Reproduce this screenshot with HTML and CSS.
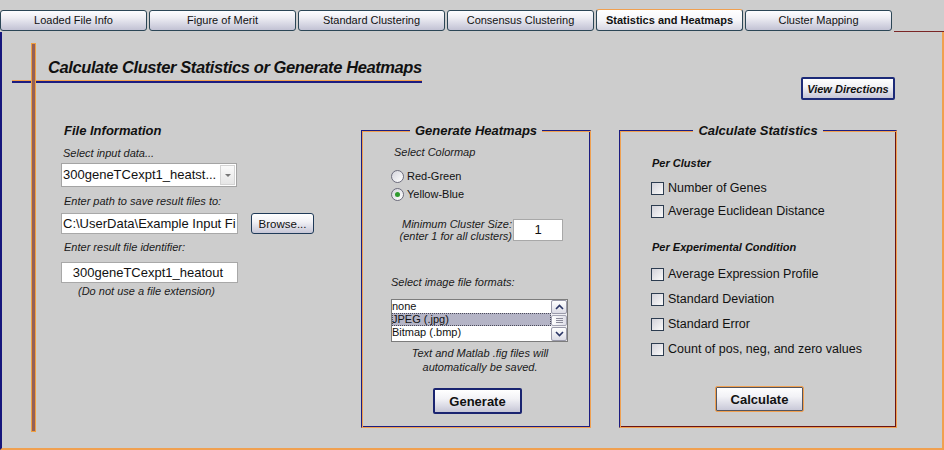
FILE: index.html
```html
<!DOCTYPE html>
<html>
<head>
<meta charset="utf-8">
<link rel="stylesheet" href="styles.css">
</head>
<body>
<div class="tabs">
  <div class="tab">Loaded File Info</div>
  <div class="tab">Figure of Merit</div>
  <div class="tab">Standard Clustering</div>
  <div class="tab">Consensus Clustering</div>
  <div class="tab active">Statistics and Heatmaps</div>
  <div class="tab">Cluster Mapping</div>
  <div class="tab-fill"></div>
</div>
<div class="panel">
  <div class="cross-v"></div>
  <div class="header">
    <div class="title-block"><h1 class="title">Calculate Cluster Statistics or Generate Heatmaps</h1></div>
    <button class="btn btn-dir">View Directions</button>
  </div>
  <div class="content">
    <div class="file-col">
      <div class="h-file">File Information</div>
      <div class="lbl lbl-1">Select input data...</div>
      <div class="combo">
        <div class="combo-text">300geneTCexpt1_heatst...</div>
        <div class="combo-btn"><span class="tri"></span></div>
      </div>
      <div class="lbl lbl-2">Enter path to save result files to:</div>
      <div class="path-row">
        <div class="field">C:\UserData\Example Input Fi</div>
        <button class="btn btn-browse">Browse...</button>
      </div>
      <div class="lbl lbl-3">Enter result file identifier:</div>
      <div class="field field-id">300geneTCexpt1_heatout</div>
      <div class="lbl note-ext">(Do not use a file extension)</div>
    </div>

    <div class="frame heat">
      <div class="frame-head"><span>Generate Heatmaps</span></div>
      <div class="frame-body">
        <div class="lbl cm">Select Colormap</div>
        <div class="radio-row first"><span class="radio"></span><span>Red-Green</span></div>
        <div class="radio-row"><span class="radio on"></span><span>Yellow-Blue</span></div>
        <div class="min-row">
          <div class="min-lbl">Minimum Cluster Size:<br>(enter 1 for all clusters)</div>
          <div class="field field-min">1</div>
        </div>
        <div class="lbl fmt">Select image file formats:</div>
        <div class="listbox">
          <div class="items">
            <div class="item">none</div>
            <div class="item sel">JPEG (.jpg)</div>
            <div class="item">Bitmap (.bmp)</div>
            <div class="item">EPS (.eps)</div>
          </div>
          <div class="sb">
            <div class="sb-btn"><svg width="9" height="6" viewBox="0 0 9 6"><path d="M1 5 L4.5 1.5 L8 5" fill="none" stroke="#2a3566" stroke-width="1.6"/></svg></div>
            <div class="sb-thumb"><i></i><i></i><i></i></div>
            <div class="sb-btn"><svg width="9" height="6" viewBox="0 0 9 6"><path d="M1 1 L4.5 4.5 L8 1" fill="none" stroke="#2a3566" stroke-width="1.6"/></svg></div>
          </div>
        </div>
        <div class="note">Text and Matlab .fig files will<br>automatically be saved.</div>
        <button class="btn btn-big btn-gen">Generate</button>
      </div>
    </div>

    <div class="frame stats">
      <div class="frame-head"><span>Calculate Statistics</span></div>
      <div class="frame-body">
        <div class="sub sub-1">Per Cluster</div>
        <div class="cb-row r1"><span class="cb"></span><span>Number of Genes</span></div>
        <div class="cb-row r2"><span class="cb"></span><span>Average Euclidean Distance</span></div>
        <div class="sub sub-2">Per Experimental Condition</div>
        <div class="cb-row r3"><span class="cb"></span><span>Average Expression Profile</span></div>
        <div class="cb-row r4"><span class="cb"></span><span>Standard Deviation</span></div>
        <div class="cb-row r4"><span class="cb"></span><span>Standard Error</span></div>
        <div class="cb-row r4"><span class="cb"></span><span>Count of pos, neg, and zero values</span></div>
        <button class="btn btn-big btn-calc">Calculate</button>
      </div>
    </div>
  </div>
</div>
</body>
</html>
```

FILE: styles.css
```css
* { box-sizing: border-box; }
html, body { margin: 0; padding: 0; }
body {
  width: 944px;
  height: 450px;
  overflow: hidden;
  background: #cdcdcd;
  font-family: "Liberation Sans", Arial, sans-serif;
  color: #111;
}

/* Tabs */
.tabs {
  display: flex;
  align-items: flex-start;
  gap: 2px;
  padding-top: 10px;
  height: 32px;
}
.tab {
  flex: none;
  width: 147px;
  height: 21px;
  border: 1px solid #2b4656;
  border-radius: 3px;
  background: linear-gradient(#fdfdff 0%, #eeeef4 35%, #c2c2d4 100%);
  font-size: 11px;
  line-height: 19px;
  text-align: center;
}
.tab.active {
  height: 22px;
  margin-top: -1px;
  border-top-color: #f0a050;
  font-weight: bold;
  line-height: 20px;
  background: linear-gradient(#ffffff 0%, #f6f6f9 50%, #d6d6e2 100%);
}
.tab-fill {
  flex: 1;
  align-self: stretch;
  border-bottom: 1px solid #7a2626;
}

/* Panel */
.panel {
  position: relative;
  height: 418px;
  border-left: 2px solid #16167c;
  border-right: 2px solid #f0a050;
  border-bottom: 2px solid #f0a050;
}
.cross-v {
  position: absolute;
  left: 29px;
  top: 11px;
  width: 5px;
  height: 389px;
  background: #946058;
  border: 1px solid #f0a040;
  z-index: 1;
}
.header {
  display: flex;
  align-items: flex-start;
}
.title-block {
  flex: none;
  margin: 25px 0 0 10px;
  width: 410px;
  padding: 0 0 4px 36px;
  border-bottom: 2px solid #1c1c80;
  box-shadow: inset 0 -1px 0 #f0a050;
}
.title {
  margin: 0;
  font-size: 16.5px;
  line-height: 20px;
  font-weight: bold;
  font-style: italic;
  letter-spacing: -0.4px;
  white-space: nowrap;
}

/* Buttons */
.btn {
  font-family: inherit;
  color: #111;
  padding: 0;
  cursor: default;
  background: linear-gradient(#ffffff 0%, #f2f2f6 40%, #c6c6d6 100%);
}
.btn-dir {
  margin: 45px 47px 0 auto;
  width: 94px;
  height: 23px;
  border: 2px solid #1c2a78;
  border-radius: 2px;
  font-size: 11px;
  font-weight: bold;
  font-style: italic;
}
.btn-browse {
  width: 63px;
  height: 21px;
  border: 1px solid #1f3a58;
  border-radius: 3px;
  font-size: 11.5px;
}
.btn-big {
  width: 89px;
  height: 26px;
  font-size: 13px;
  font-weight: bold;
  align-self: center;
  margin-left: 3px;
}
.btn-gen {
  margin-top: 14px;
  border: 2px solid #1a2470;
  border-radius: 2px;
}
.btn-calc {
  margin-top: 28px;
  border: 1px solid #f0a050;
  box-shadow: inset 0 0 0 1px #55555e;
  border-radius: 2px;
}

/* Content */
.content {
  display: flex;
  align-items: flex-start;
  margin-top: 23px;
  padding-left: 59px;
}
.file-col {
  flex: none;
  width: 300px;
}
.h-file {
  margin-left: 3px;
  font-size: 13px;
  line-height: 16px;
  font-weight: bold;
  font-style: italic;
}
.lbl {
  font-size: 11px;
  line-height: 14px;
  font-style: italic;
  color: #1a1a1a;
}
.lbl-1 { margin: 7px 0 0 2px; }
.lbl-2 { margin: 7px 0 0 3px; }
.lbl-3 { margin: 6px 0 0 3px; }
.note-ext { margin-top: 1px; width: 177px; text-align: center; padding-right: 6px; }

.combo {
  margin-top: 3px;
  width: 176px;
  height: 24px;
  display: flex;
  background: #fff;
  border: 1px solid #a4a4a4;
}
.combo-text {
  flex: 1;
  font-size: 13px;
  line-height: 22px;
  padding-left: 1px;
  white-space: nowrap;
  overflow: hidden;
}
.combo-btn {
  width: 15px;
  margin: 1px;
  border: 1px solid #d4d4d4;
  background: linear-gradient(#fafafa, #e6e6e6);
  display: flex;
  align-items: center;
  justify-content: center;
}
.tri {
  width: 0;
  height: 0;
  border-left: 3px solid transparent;
  border-right: 3px solid transparent;
  border-top: 3px solid #777;
}
.path-row {
  margin-top: 5px;
  display: flex;
  gap: 13px;
}
.field {
  width: 177px;
  height: 21px;
  background: #fff;
  border: 1px solid #a8a8a8;
  font-size: 13px;
  line-height: 19px;
  padding-left: 1px;
  white-space: nowrap;
  overflow: hidden;
}
.field-id {
  margin-top: 8px;
  text-align: center;
  padding-right: 4px;
}

/* Frames */
.frame {
  flex: none;
  display: flex;
  flex-direction: column;
  height: 305px;
  --out: #1c1c80;
  --hi: #f0a050;
  --dk: #1c1c80;
}
.frame.heat { width: 230px; }
.frame.stats { width: 278px; margin-left: 28px; --dk: #6a1414; }
.frame-head {
  display: flex;
  height: 16px;
  font-size: 13px;
  line-height: 16px;
  font-weight: bold;
  font-style: italic;
}
.frame-head span { padding: 0 5px; }
.frame-head::before,
.frame-head::after {
  content: "";
  flex: 1;
  align-self: flex-end;
  height: 8px;
  border-top: 1px solid var(--out);
}
.frame-head::before {
  border-left: 1px solid var(--out);
  box-shadow: inset 1px 1px 0 var(--hi);
}
.frame-head::after {
  border-right: 1px solid var(--hi);
  box-shadow: inset 0 1px 0 var(--hi), inset -1px 0 0 var(--dk);
}
.frame-body {
  flex: 1;
  display: flex;
  flex-direction: column;
  align-items: flex-start;
  border-left: 1px solid var(--out);
  border-right: 1px solid var(--hi);
  border-bottom: 1px solid var(--hi);
  box-shadow: inset 1px 0 0 var(--hi), inset -1px -1px 0 var(--dk);
}

/* Heatmap frame */
.cm { margin: 6px 0 0 32px; }
.radio-row {
  display: flex;
  align-items: center;
  gap: 3px;
  height: 18px;
  margin-left: 29px;
  font-size: 11px;
}
.radio-row.first { margin-top: 8px; }
.radio {
  width: 13px;
  height: 13px;
  border-radius: 50%;
  border: 1px solid #6c6c7c;
  background: linear-gradient(135deg, #d4d4dc, #ffffff);
  display: flex;
  align-items: center;
  justify-content: center;
}
.radio.on::after {
  content: "";
  width: 5px;
  height: 5px;
  border-radius: 50%;
  background: #2f9a2f;
}
.min-row {
  display: flex;
  align-items: center;
  gap: 1px;
  margin: 15px 0 0 31px;
}
.min-lbl {
  width: 119px;
  font-size: 11px;
  line-height: 12px;
  font-style: italic;
  text-align: right;
  color: #1a1a1a;
}
.field-min {
  width: 50px;
  height: 22px;
  line-height: 20px;
  text-align: center;
  padding: 0;
}
.fmt { margin: 33px 0 0 29px; }
.listbox {
  margin: 10px 0 0 29px;
  width: 177px;
  height: 43px;
  display: flex;
  background: #fff;
  border: 1px solid #7c7c7c;
  overflow: hidden;
}
.items {
  flex: 1;
  height: 41px;
  font-size: 11px;
  line-height: 13px;
  overflow: hidden;
}
.item { height: 13px; white-space: nowrap; }
.item.sel {
  background: #b4b4c6;
  outline: 1px dotted #4a4a5a;
  outline-offset: -1px;
}
.sb {
  width: 16px;
  display: flex;
  flex-direction: column;
  background: #f0f0f4;
}
.sb-btn {
  height: 14px;
  border: 1px solid #9a9aaa;
  border-radius: 2px;
  background: linear-gradient(#ffffff, #dcdce6);
  display: flex;
  align-items: center;
  justify-content: center;
}
.sb-thumb {
  flex: 1;
  margin: 1px 0;
  border: 1px solid #a4a4b4;
  border-radius: 2px;
  background: linear-gradient(90deg, #ffffff, #dedee8);
  display: flex;
  flex-direction: column;
  align-items: center;
  justify-content: center;
  gap: 1px;
}
.sb-thumb i {
  display: block;
  width: 7px;
  height: 1px;
  background: #8a8a9a;
}
.note {
  align-self: stretch;
  margin-top: 4px;
  padding-left: 8px;
  font-size: 11px;
  line-height: 14px;
  font-style: italic;
  text-align: center;
  color: #1a1a1a;
}

/* Stats frame */
.sub {
  margin-left: 32px;
  font-size: 11px;
  line-height: 14px;
  font-weight: bold;
  font-style: italic;
}
.sub-1 { margin-top: 17px; }
.sub-2 { margin-top: 20px; }
.cb-row {
  display: flex;
  align-items: center;
  gap: 4px;
  height: 18px;
  margin-left: 31px;
  font-size: 12.5px;
  white-space: nowrap;
}
.cb-row.r1 { margin-top: 9px; }
.cb-row.r2 { margin-top: 5px; }
.cb-row.r3 { margin-top: 11px; }
.cb-row.r4 { margin-top: 7px; }
.cb {
  flex: none;
  width: 13px;
  height: 13px;
  border: 1px solid #2c3c50;
  background: linear-gradient(135deg, #d2d2da, #fafafa);
}
```
